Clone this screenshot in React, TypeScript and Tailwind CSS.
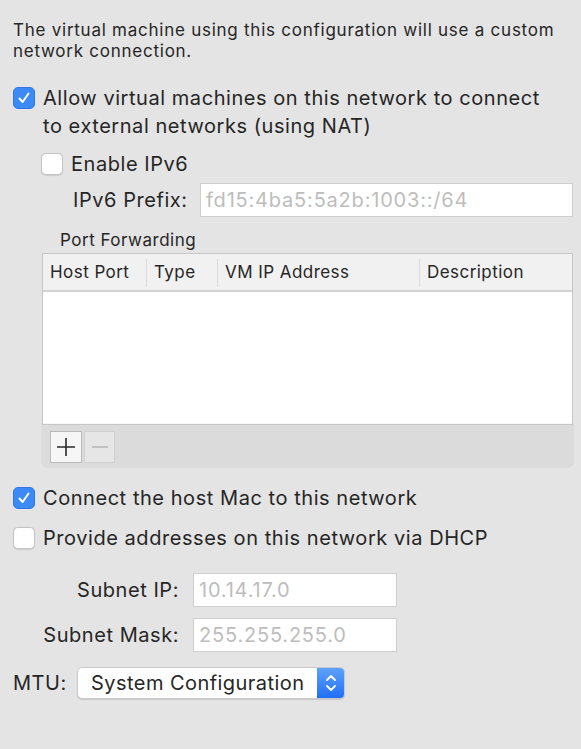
import React from "react";

const font = { fontFamily: "Inter, 'Noto Sans', sans-serif" };

function Check({ checked }: { checked: boolean }) {
  if (checked) {
    return (
      <div className="w-[22px] h-[22px] rounded-[5px] bg-[#3c8af7] border border-[#2e78e8] flex items-center justify-center shrink-0">
        <svg width="14" height="14" viewBox="0 0 14 14" fill="none">
          <path d="M2.5 7.5 L5.6 11 L11.5 2.5" stroke="white" strokeWidth="2" strokeLinecap="round" strokeLinejoin="round" />
        </svg>
      </div>
    );
  }
  return (
    <div className="w-[22px] h-[22px] rounded-[5px] bg-white border border-[#c4c4c4] shadow-[0_0.5px_1px_rgba(0,0,0,0.1)] shrink-0" />
  );
}

function Field({ value, w }: { value: string; w: string }) {
  return (
    <div className={`${w} h-[34px] bg-white border border-[#cfcfcf] flex items-center pl-[5px] text-[20px] tracking-[0.8px] text-[#bdbdbd]`}>
      {value}
    </div>
  );
}

export default function App() {
  return (
    <div className="w-[581px] h-[749px] bg-[#e4e4e4] pl-[13px] pt-[20px] text-[#262626]" style={font}>
      <p className="text-[17px] leading-[21px] tracking-[0.75px] w-[545px]">
        The virtual machine using this configuration will use a custom network connection.
      </p>

      <div className="flex items-start gap-[8px] mt-[22px]">
        <div className="mt-[3px]">
          <Check checked />
        </div>
        <div className="text-[20px] leading-[28px] tracking-[0.55px] w-[515px]">
          Allow virtual machines on this network to connect to external networks (using NAT)
        </div>
      </div>

      <div className="flex items-center gap-[8px] mt-[10px] ml-[28px] h-[28px]">
        <Check checked={false} />
        <span className="text-[20px] tracking-[0.55px]">Enable IPv6</span>
      </div>

      <div className="flex items-center mt-[5px] ml-[60px]">
        <span className="text-[20px] tracking-[0.55px] w-[127px]">IPv6 Prefix:</span>
        <Field value="fd15:4ba5:5a2b:1003::/64" w="w-[373px]" />
      </div>

      <div className="ml-[47px] mt-[13px] text-[17px] leading-[20px] tracking-[0.5px]">Port Forwarding</div>

      <div className="ml-[29px] mt-[3px] w-[531px]">
        <div className="border border-[#c6c6c6] border-b-0">
          <div className="h-[38px] bg-[#f1f1f1] border-b-2 border-[#d3d3d3] flex items-center text-[17px] tracking-[0.45px] pt-[2px]">
            <div className="w-[103px] pl-[7px]">Host Port</div>
            <div className="w-px h-[28px] bg-[#d9d9d9]" />
            <div className="w-[70px] pl-[7px]">Type</div>
            <div className="w-px h-[28px] bg-[#d9d9d9]" />
            <div className="w-[201px] pl-[7px]">VM IP Address</div>
            <div className="w-px h-[28px] bg-[#d9d9d9]" />
            <div className="flex-1 pl-[7px]">Description</div>
          </div>
          <div className="h-[132px] bg-white" />
        </div>
        <div className="h-[43px] bg-[#dbdbdb] border-t border-[#c6c6c6] rounded-b-[5px] flex items-start pt-[6px] pl-[8px] gap-[2px] shadow-[0_0_0_0.5px_rgba(0,0,0,0.06)]">
          <div className="w-[32px] h-[32px] bg-[#f6f6f6] border border-[#b9b9b9] flex items-center justify-center">
            <svg width="20" height="20" viewBox="0 0 20 20">
              <path d="M10 1 V19 M1 10 H19" stroke="#2a2a2a" strokeWidth="1.6" />
            </svg>
          </div>
          <div className="w-[31px] h-[32px] bg-[#e6e6e6] border border-[#d0d0d0] flex items-center justify-center">
            <svg width="20" height="20" viewBox="0 0 20 20">
              <path d="M2 10 H18" stroke="#b8b8b8" strokeWidth="1.6" />
            </svg>
          </div>
        </div>
      </div>

      <div className="flex items-center gap-[8px] mt-[17px] h-[28px]">
        <Check checked />
        <span className="text-[20px] tracking-[0.55px]">Connect the host Mac to this network</span>
      </div>

      <div className="flex items-center gap-[8px] mt-[12px] h-[28px]">
        <Check checked={false} />
        <span className="text-[20px] tracking-[0.55px]">Provide addresses on this network via DHCP</span>
      </div>

      <div className="flex items-center mt-[21px]">
        <span className="text-[20px] tracking-[0.55px] w-[166px] text-right">Subnet IP:</span>
        <div className="ml-[14px]">
          <Field value="10.14.17.0" w="w-[204px]" />
        </div>
      </div>

      <div className="flex items-center mt-[11px]">
        <span className="text-[20px] tracking-[0.55px] w-[166px] text-right">Subnet Mask:</span>
        <div className="ml-[14px]">
          <Field value="255.255.255.0" w="w-[204px]" />
        </div>
      </div>

      <div className="flex items-center mt-[15px]">
        <span className="text-[20px] tracking-[0.55px] w-[64px]">MTU:</span>
        <div className="w-[268px] h-[32px] bg-white rounded-[5px] border border-[#c9c9c9] shadow-[0_1px_1px_rgba(0,0,0,0.12)] flex overflow-hidden">
          <div className="flex-1 flex items-center pl-[13px] text-[20px] tracking-[0.45px]">System Configuration</div>
          <div className="w-[27px] h-full bg-gradient-to-b from-[#5ea1fb] to-[#1f6ff5] flex items-center justify-center">
            <svg width="14" height="22" viewBox="0 0 14 22" fill="none">
              <path d="M3 8 L7 4 L11 8" stroke="white" strokeWidth="1.8" strokeLinecap="round" strokeLinejoin="round" />
              <path d="M3 14 L7 18 L11 14" stroke="white" strokeWidth="1.8" strokeLinecap="round" strokeLinejoin="round" />
            </svg>
          </div>
        </div>
      </div>
    </div>
  );
}
